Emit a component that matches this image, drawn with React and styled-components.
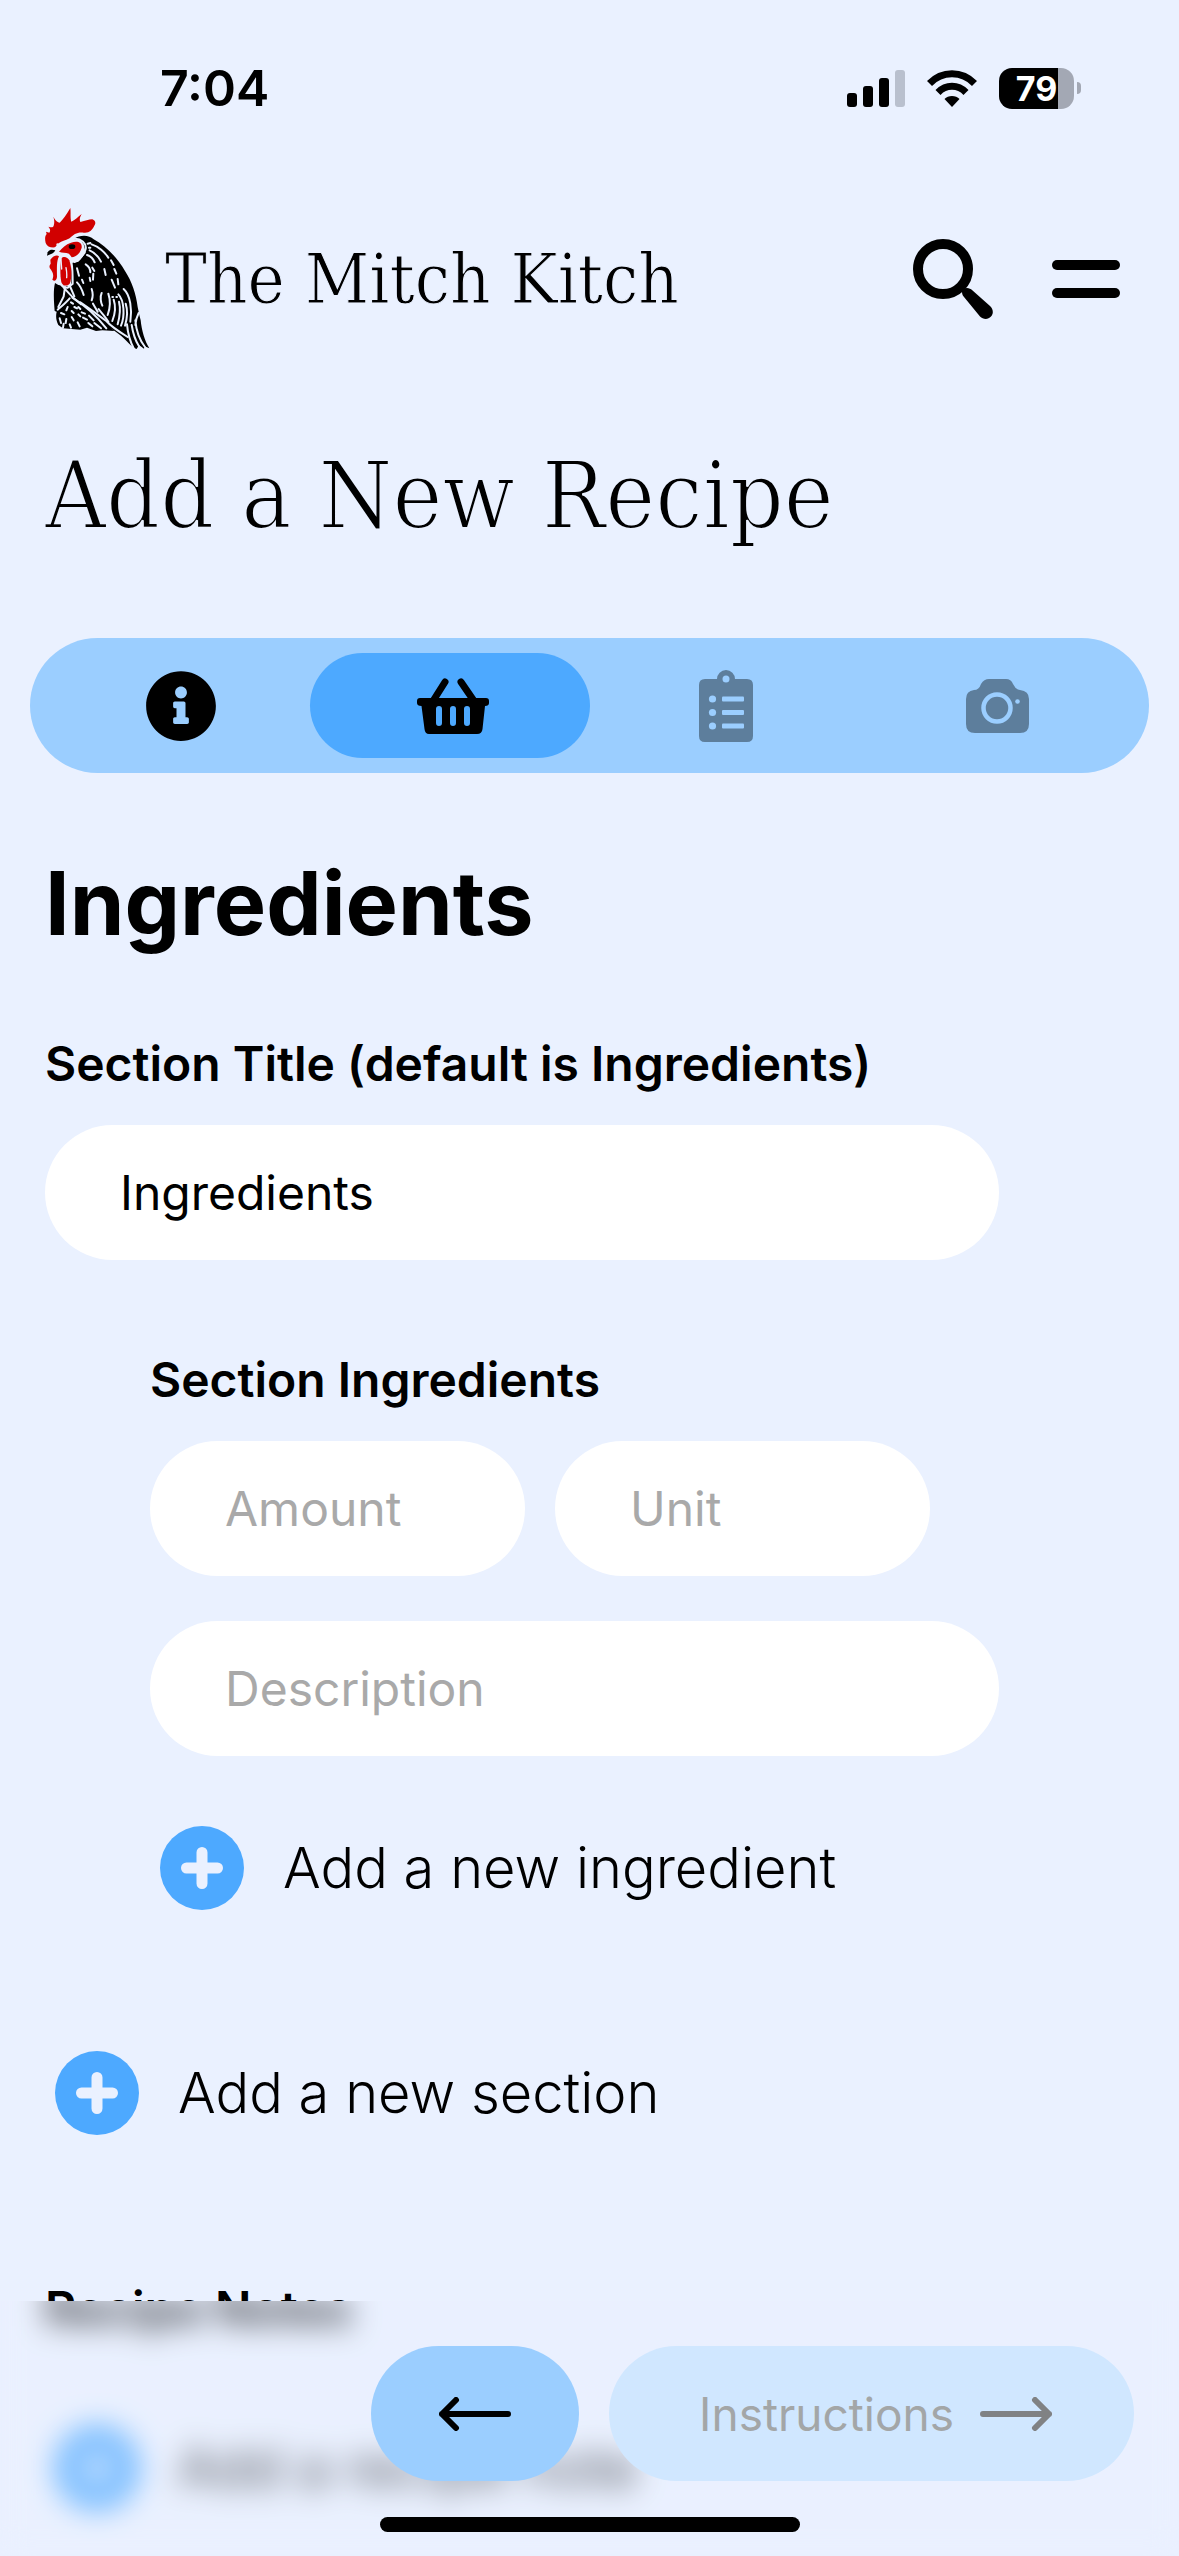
import React from "react";
import styled, { createGlobalStyle } from "styled-components";
import { FaInfoCircle } from "react-icons/fa";

const color = {
  page: "#eaf1ff",
  pale: "#d0e7ff",
  soft: "#9bceff",
  strong: "#4da9ff",
  muted: "#5d7e9c",
  hint: "#a9a9a9",
};

const sans = `Inter, "Liberation Sans", sans-serif`;
const serif = `"DejaVu Serif Condensed", "DejaVu Serif", serif`;

const GlobalStyle = createGlobalStyle`
  *, *::before, *::after { box-sizing: border-box; }
  body {
    margin: 0;
    background: ${color.page};
    color: #000;
    font-family: ${sans};
  }
  h1, h2, p { margin: 0; }
  button {
    border: 0;
    padding: 0;
    background: none;
    color: inherit;
    font: inherit;
    cursor: pointer;
  }
  svg { display: block; flex: none; }
`;

const Screen = styled.div`
  display: flex;
  flex-direction: column;
  min-height: 100vh;
  padding-bottom: 40px;
`;

const StatusBar = styled.div`
  display: flex;
  justify-content: space-between;
  align-items: center;
  height: 176px;
  padding: 0 98px 0 160px;
`;

const Clock = styled.p`
  font-size: 50px;
  line-height: 60px;
  font-weight: 600;
`;

const StatusIcons = styled.div`
  display: flex;
  align-items: center;
  gap: 22px;
`;

const Signal = styled.div`
  display: flex;
  align-items: flex-end;
  gap: 6px;
  height: 37px;
`;

const SignalBar = styled.span`
  width: 10px;
  height: ${(p) => p.$height}px;
  border-radius: 3px;
  background: ${(p) => (p.$off ? "#b9c0ce" : "#000")};
`;

const Battery = styled.div`
  display: flex;
  align-items: center;
  gap: 3px;
`;

const BatteryBody = styled.span`
  width: 75px;
  border-radius: 13px;
  background: linear-gradient(to right, #000 79%, #a3a8b4 79%);
  color: #fff;
  font-size: 34px;
  line-height: 41px;
  font-weight: 700;
  text-align: center;
`;

const BatteryTip = styled.span`
  width: 4px;
  height: 12px;
  border-radius: 0 4px 4px 0;
  background: #a3a8b4;
`;

const Header = styled.header`
  display: flex;
  align-items: center;
  justify-content: space-between;
  margin-top: 31px;
  padding: 0 59px 0 45px;
`;

const Brand = styled.a`
  display: flex;
  align-items: center;
  gap: 15px;
  color: inherit;
  text-decoration: none;
  font-family: ${serif};
  font-size: 70px;
  line-height: 90px;
  -webkit-text-stroke: 1px ${color.page};
`;

const HeaderActions = styled.nav`
  display: flex;
  align-items: center;
  gap: 59px;
`;

const PageTitle = styled.h1`
  margin-top: 86px;
  padding: 0 45px;
  font-family: ${serif};
  font-size: 94px;
  line-height: 120px;
  font-weight: 400;
  -webkit-text-stroke: 2px ${color.page};
`;

const Steps = styled.nav`
  position: relative;
  display: grid;
  grid-template-columns: repeat(4, 1fr);
  height: 135px;
  margin: 82px 30px 0;
  padding: 15px;
  border-radius: 68px;
  background: ${color.soft};
`;

const StepHighlight = styled.span`
  position: absolute;
  top: 15px;
  bottom: 15px;
  left: 25%;
  width: 25%;
  border-radius: 53px;
  background: ${color.strong};
`;

const Step = styled.button`
  position: relative;
  display: flex;
  align-items: center;
  justify-content: center;
  color: ${(p) => (p.$pending ? color.muted : "#000")};
`;

const Form = styled.form`
  display: flex;
  flex-direction: column;
  align-items: stretch;
  padding: 76px 180px 0 45px;
`;

const FormTitle = styled.h2`
  margin-bottom: 77px;
  font-size: 88px;
  line-height: 108px;
  font-weight: 700;
`;

const Label = styled.label`
  margin-bottom: 31px;
  font-size: 48px;
  line-height: 60px;
  font-weight: 600;
  white-space: nowrap;
`;

const Field = styled.input`
  min-width: 0;
  width: 100%;
  height: 135px;
  padding: 0 75px;
  border: 0;
  border-radius: 68px;
  background: #fff;
  color: #000;
  font-family: ${sans};
  font-size: 48px;
  font-weight: 400;
  outline: 0;
  &::placeholder {
    color: ${color.hint};
    opacity: 1;
  }
`;

const Section = styled.div`
  display: flex;
  flex-direction: column;
  padding: 90px 0 141px 105px;
`;

const Measures = styled.div`
  display: grid;
  grid-template-columns: repeat(2, minmax(0, 375px));
  gap: 30px;
  margin-bottom: 45px;
`;

const AddButton = styled.button`
  display: flex;
  align-items: center;
  align-self: flex-start;
  gap: 39px;
  padding-left: 10px;
  font-size: 56px;
  line-height: 84px;
  font-weight: 300;
  white-space: nowrap;
`;

const IngredientAdd = styled.div`
  display: flex;
  padding-top: 70px;
`;

const Notes = styled.div`
  display: flex;
  flex-direction: column;
  gap: 87px;
  padding-top: 144px;
`;

const NotesTitle = styled.p`
  font-size: 48px;
  line-height: 60px;
  font-weight: 600;
`;

/* The blurred layer reaches above the bar and is masked back to its edge,
   so that the blur is at full strength along the top. */
const BottomBar = styled.footer`
  position: fixed;
  z-index: 1;
  left: 0;
  right: 0;
  bottom: 0;
  display: flex;
  flex-direction: column;
  padding-top: 45px;

  &::before {
    content: "";
    position: absolute;
    z-index: -1;
    inset: -90px 0 0;
    mask-image: linear-gradient(to bottom, transparent 90px, #000 90px);
    background: rgba(234, 241, 255, 0.2);
    backdrop-filter: blur(15px);
  }
`;

const BottomActions = styled.div`
  display: flex;
  justify-content: flex-end;
  gap: 30px;
  padding: 0 45px 36px;
`;

const PillButton = styled.button`
  display: flex;
  align-items: center;
  justify-content: center;
  gap: 26px;
  height: 135px;
  padding: 0 ${(p) => (p.$wide ? 82 : 68)}px 0 ${(p) => (p.$wide ? 90 : 68)}px;
  border-radius: 68px;
  background: ${(p) => (p.disabled ? color.pale : color.soft)};
  color: ${(p) => (p.disabled ? "#a3a6a7" : "#000")};
  font-size: 46px;
  font-weight: 400;
`;

const HomeIndicator = styled.span`
  align-self: center;
  width: 420px;
  height: 15px;
  margin-bottom: 24px;
  border-radius: 8px;
  background: #000;
`;

const WifiIcon = () => (
  <svg width="50" height="37" viewBox="0 0 50 37" fill="none" stroke="#000" strokeWidth="7">
    <path d="M2.5 13.5 C15 .5 35 .5 47.500 13.500" />
    <path d="M11 22.500 C19 14.300 31 14.300 39 22.500" />
    <path d="M17.500 29 C21 25 29 25 32.500 29 L25 37Z" fill="#000" stroke="none" />
  </svg>
);

const SearchIcon = () => (
  <svg width="80" height="80" viewBox="0 0 80 80">
    <circle cx="30" cy="30" r="25" fill="none" stroke="#000" strokeWidth="10" />
    <path d="M49 52 C49 50 51 49 54 49 C56 49 58 50 59 51 L77 67 C80 70 81 74 78 77.500 C75 81 70 80.500 67 77.500 L51 58 C49 56 49 54 49 52Z" />
  </svg>
);

const MenuIcon = () => (
  <svg width="68" height="38" viewBox="0 0 68 38">
    <rect width="68" height="10" rx="5" />
    <rect y="28" width="68" height="10" rx="5" />
  </svg>
);

const BasketIcon = () => (
  <svg width="72" height="56" viewBox="0 0 72 56" fill="currentColor">
    <path d="M28 4 L16 23 M44 4 L57 23" stroke="currentColor" strokeWidth="7" strokeLinecap="round" />
    <path
      fillRule="evenodd"
      d="M3 20 H69 Q72 20 72 23 V25 Q72 28 68 28 L65.500 51 Q65 56 60 56 H12 Q8 56 7.500 51 L4.500 28 Q0 28 0 25 V23 Q0 20 3 20Z
         M19 31 V45 A3 3 0 0 0 25 45 V31 A3 3 0 0 0 19 31Z
         M33 31 V45 A3 3 0 0 0 39 45 V31 A3 3 0 0 0 33 31Z
         M47 31 V45 A3 3 0 0 0 53 45 V31 A3 3 0 0 0 47 31Z"
    />
  </svg>
);

const ClipboardIcon = () => (
  <svg width="54" height="72" viewBox="0 0 54 72" fill="currentColor">
    <path d="M6 9 H18 A9 9 0 0 1 36 9 H48 Q54 9 54 15 V66 Q54 72 48 72 H6 Q0 72 0 66 V15 Q0 9 6 9Z" />
    <g fill={color.soft}>
      <circle cx="27" cy="9" r="3.500" />
      {[29, 42.5, 56].map((y) => (
        <React.Fragment key={y}>
          <circle cx="13.500" cy={y} r="3.600" />
          <rect x="23" y={y - 2.5} width="22" height="5" rx="1" />
        </React.Fragment>
      ))}
    </g>
  </svg>
);

const CameraIcon = () => (
  <svg width="63" height="54" viewBox="0 0 63 54" fill="currentColor">
    <path d="M23 0 H40 Q45 0 47 5 Q50 11 54 11 Q63 12 63 20 V45 Q63 54 54 54 H9 Q0 54 0 45 V20 Q0 12 8 11 Q13 11 15 5 Q18 0 23 0Z" />
    <circle cx="31" cy="29" r="13.500" fill="none" stroke={color.soft} strokeWidth="4.500" />
    <circle cx="51.500" cy="22.500" r="2.300" fill={color.soft} />
  </svg>
);

const PlusIcon = () => (
  <svg width="84" height="84" viewBox="0 0 84 84">
    <circle cx="42" cy="42" r="42" fill={color.strong} />
    <path d="M42 26.500 V57.500 M26.500 42 H57.500" stroke={color.page} strokeWidth="11" strokeLinecap="round" />
  </svg>
);

const ArrowIcon = ({ right }) => (
  <svg width="72" height="34" viewBox="0 0 72 34" fill="none" stroke={right ? "#808284" : "#000"} strokeWidth="6" strokeLinecap="round" strokeLinejoin="round">
    {right ? <path d="M3 17 H69 M55 3 L69 17 L55 31" /> : <path d="M69 17 H3 M17 3 L3 17 L17 31" />}
  </svg>
);

const RoosterLogo = () => (
  <svg width="105" height="143" viewBox="44 22 315 429">
    <path d="M130 118 C150 104 176 105 190 119 C226 138 262 175 284 214 C304 244 318 285 322 322 L327 346 L331 362 C334 392 343 424 357 446 L343 440 L341 447 L326 436 L319 448 C304 442 290 424 272 408 L240 384 L252 394 L216 392 L197 394 L170 384 L150 390 L98 386 L84 376 C77 362 76 350 79 336 L73 334 C71 310 68 274 74 250 L84 256 L122 262 L124 190 L144 186 L166 160 L160 134 L150 122Z" />
    <path d="M46 130 C43 118 44 108 49 103 L47 96 L57 99 C61 93 60 88 54 81 C63 84 68 84 70 78 C73 68 72 60 69 51 C76 64 82 68 88 69 C98 60 108 45 120 25 C122 40 119 54 123 66 C134 62 142 52 154 43 C148 54 147 60 150 67 C165 64 175 59 186 59 C195 62 197 70 193 76 C186 92 176 101 160 99 C140 97 130 104 118 116 C104 124 94 124 86 130 L74 143 C60 144 50 141 46 130Z" fill="#d10000" />
    <g fill="none" stroke={color.page} strokeWidth="6" strokeLinecap="round">
      <path d="M104 129 C120 116 142 112 158 126 C172 138 168 158 150 172 C140 180 130 182 124 181" />
      <path d="M160 160 C156 172 146 184 132 188" strokeWidth="4" />
      <path d="M78 158 C92 160 100 160 110 166 C124 176 127 192 127 252 L112 264 C90 264 84 250 85 196 Q87 174 98 168" />
      <path d="M104 262 L100 290 L84 322 M100 264 L130 296 L152 314 M120 262 L132 290" />
      <path d="M82 330 C96 318 106 310 118 296 M126 294 C156 312 196 346 228 386" />
      <path d="M150 308 C180 328 206 348 228 364 C242 380 266 396 292 412" />
      <path d="M184 134 C204 140 224 158 234 174 M178 152 C196 160 206 174 212 186 M170 166 C182 170 190 180 193 188" />
      <path d="M140 206 L146 228 M166 194 C176 200 180 208 180 218 M186 204 L192 214 M189 222 L188 240 M155 240 L159 250 M140 248 C148 256 156 272 160 286 M242 182 L250 196 M252 208 L258 222 M222 208 L226 226 M262 238 L264 254 M244 240 L254 264 M178 234 L180 244" />
      <path d="M184 268 C188 280 188 292 184 302 M214 280 C208 292 212 310 216 318 M234 282 C240 300 240 324 232 346 M250 300 C256 318 254 344 246 364 M264 284 C282 302 284 350 272 378 M280 268 C300 286 306 330 300 366 M266 306 C272 330 268 352 262 374 M286 312 C292 330 290 358 284 378" />
      <path d="M205 328 C212 338 226 352 234 366 M188 312 L202 336 M290 374 C292 398 298 424 312 450 M304 376 C308 402 316 424 326 440 M315 362 C318 398 330 424 344 442 M325 340 C318 354 316 362 315 376" />
      <path d="M92 340 L102 344 M88 356 L92 370 M112 322 L108 332 M122 308 L128 312 M132 322 L140 326 M124 334 L130 340 M144 322 L150 328 M108 358 L106 370 M124 352 L130 362 M144 344 L150 350 M154 338 L164 342 M142 368 L148 380 M158 354 L170 360 M176 348 L190 362 M174 370 L186 380 M192 370 L212 386 M118 374 L122 384 M100 372 L98 384" />
      <path d="M172 132 L180 130 M176 144 L180 144 M246 292 L248 292 M258 292 L260 292" />
    </g>
    <path d="M86 156 C96 145 106 134 122 129 C142 122 156 128 154 144 C150 160 138 172 124 173 L116 162 C106 158 96 160 86 156Z" fill="#d10000" />
    <ellipse cx="125" cy="141" rx="10" ry="7" />
    <path d="M50 168 L52 158 C58 148 68 150 75 152 C72 160 62 164 50 168Z" />
    <path d="M60 180 C68 169 80 164 86 170 C78 186 80 206 80 232 C78 244 72 246 66 240 C70 230 70 222 62 210 C56 204 56 198 61 192Z" fill="#d10000" />
    <path d="M93 176 C100 168 112 172 117 182 C124 202 126 235 118 252 C110 261 98 259 94 250 C90 240 88 205 93 176Z" fill="#d10000" />
    <path d="M91 164 L94 208 M107 204 C109 214 110 224 109 234" fill="none" stroke={color.page} strokeWidth="4" strokeLinecap="round" />
    <circle cx="82" cy="135" r="4" fill={color.page} />
  </svg>
);

const steps = [
  { name: "Info", icon: <FaInfoCircle size={72} /> },
  { name: "Ingredients", icon: <BasketIcon /> },
  { name: "Instructions", icon: <ClipboardIcon />, pending: true },
  { name: "Photos", icon: <CameraIcon />, pending: true },
];

const signal = [14, 21, 29, 37];

export default function App() {
  return (
    <>
      <GlobalStyle />
      <Screen>
        <StatusBar>
          <Clock>7:04</Clock>
          <StatusIcons>
            <Signal>
              {signal.map((height, i) => (
                <SignalBar key={height} $height={height} $off={i === 3} />
              ))}
            </Signal>
            <WifiIcon />
            <Battery>
              <BatteryBody>79</BatteryBody>
              <BatteryTip />
            </Battery>
          </StatusIcons>
        </StatusBar>

        <Header>
          <Brand href="#home">
            <RoosterLogo />
            The Mitch Kitch
          </Brand>
          <HeaderActions>
            <button type="button" aria-label="Search">
              <SearchIcon />
            </button>
            <button type="button" aria-label="Menu">
              <MenuIcon />
            </button>
          </HeaderActions>
        </Header>

        <main>
          <PageTitle>Add a New Recipe</PageTitle>

          <Steps aria-label="Recipe steps">
            <StepHighlight />
            {steps.map((step) => (
              <Step key={step.name} type="button" aria-label={step.name} $pending={step.pending}>
                {step.icon}
              </Step>
            ))}
          </Steps>

          <Form>
            <FormTitle>Ingredients</FormTitle>
            <Label htmlFor="section-title">Section Title (default is Ingredients)</Label>
            <Field id="section-title" type="text" defaultValue="Ingredients" />

            <Section>
              <Label htmlFor="amount">Section Ingredients</Label>
              <Measures>
                <Field id="amount" type="text" placeholder="Amount" />
                <Field type="text" placeholder="Unit" aria-label="Unit" />
              </Measures>
              <Field type="text" placeholder="Description" aria-label="Description" />
              <IngredientAdd>
                <AddButton type="button">
                  <PlusIcon />
                  Add a new ingredient
                </AddButton>
              </IngredientAdd>
            </Section>

            <AddButton type="button">
              <PlusIcon />
              Add a new section
            </AddButton>

            <Notes>
              <NotesTitle>Recipe Notes</NotesTitle>
              <AddButton type="button">
                <PlusIcon />
                Add a recipe note
              </AddButton>
            </Notes>
          </Form>
        </main>
      </Screen>

      <BottomBar>
        <BottomActions>
          <PillButton type="button" aria-label="Back">
            <ArrowIcon />
          </PillButton>
          <PillButton type="button" disabled $wide>
            Instructions
            <ArrowIcon right />
          </PillButton>
        </BottomActions>
        <HomeIndicator />
      </BottomBar>
    </>
  );
}
